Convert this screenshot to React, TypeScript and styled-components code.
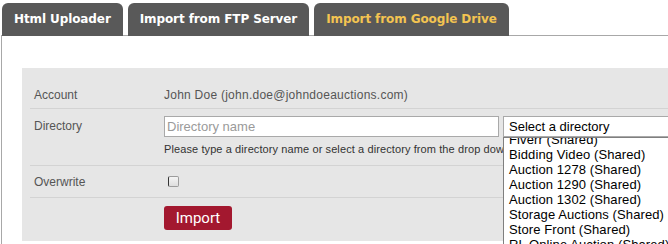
import * as React from 'react';
import styled, { createGlobalStyle } from 'styled-components';

const GlobalStyle = createGlobalStyle`
    html, body {
        margin: 0;
        padding: 0;
        background: #ffffff;
        overflow: hidden;
        font-family: "Liberation Sans", Arial, sans-serif;
    }
`;

const Page = styled.div`
    width: 760px;
    padding: 3px 0 0 1px;
`;

const TabBar = styled.div`
    display: flex;
    gap: 5px;
    padding-left: 1px;
    margin-bottom: -1px;
    position: relative;
    z-index: 1;
`;

const Tab = styled.div<{ $active?: boolean }>`
    height: 33px;
    line-height: 32px;
    padding: 0 12px;
    background: #595959;
    border-radius: 6px 6px 0 0;
    color: ${p => (p.$active ? '#f3c451' : '#ffffff')};
    font-family: "DejaVu Sans", Verdana, sans-serif;
    font-weight: bold;
    font-size: 12px;
    letter-spacing: -0.1px;
    white-space: nowrap;
    cursor: pointer;
`;

const Panel = styled.div`
    border-top: 1px solid #a8a8a8;
    border-left: 1px solid #a8a8a8;
    padding: 32px 0 0 20px;
    min-height: 220px;
`;

const FormBox = styled.div`
    background: #e6e6e6;
    padding: 13px 0 11px 8px;
`;

const Row = styled.div<{ $last?: boolean }>`
    display: grid;
    grid-template-columns: 134px 1fr;
    border-bottom: ${p => (p.$last ? 'none' : '1px solid #d3d3d3')};
`;

const Label = styled.div`
    padding-left: 4px;
    font-size: 12px;
    color: #555555;
    display: flex;
    align-items: center;
`;

const Value = styled.div`
    font-size: 12px;
    letter-spacing: 0.25px;
    color: #555555;
    display: flex;
    align-items: center;
`;

const TopLabel = styled(Label)`
    align-items: flex-start;
    padding-top: 7px;
    line-height: 21px;
`;

const DirectoryCell = styled.div`
    padding: 7px 0 9px;
`;

const InputLine = styled.div`
    display: flex;
    gap: 4px;
`;

const TextInput = styled.input`
    box-sizing: border-box;
    width: 335px;
    height: 21px;
    margin: 0;
    border: 1px solid #a9a9a9;
    padding: 0 2px;
    background: #ffffff;
    font-family: "Liberation Sans", Arial, sans-serif;
    font-size: 13px;
    color: #222222;
    outline: none;

    &::placeholder {
        color: #9a9a9a;
    }
`;

const SelectBox = styled.div`
    position: relative;
    box-sizing: border-box;
    width: 220px;
    height: 21px;
    border: 1px solid #a9a9a9;
    background: #ffffff;
    padding-left: 5px;
    font-size: 13px;
    line-height: 19px;
    color: #000000;
`;

const DropList = styled.div`
    position: absolute;
    top: 20px;
    left: -1px;
    width: 200px;
    height: 130px;
    overflow: hidden;
    background: #ffffff;
    border: 1px solid #7f7f7f;
    z-index: 2;
`;

const DropItem = styled.div`
    padding-left: 5px;
    line-height: 15px;
    font-size: 13px;
    letter-spacing: 0.1px;
    color: #000000;
    white-space: nowrap;
`;

const HelpText = styled.div`
    margin-top: 5px;
    line-height: 14px;
    font-size: 11px;
    letter-spacing: 0.1px;
    color: #333333;
    white-space: nowrap;
`;

const CheckRow = styled(Row)`
    height: 31px;
`;

const CheckBox = styled.span`
    box-sizing: border-box;
    display: inline-block;
    width: 11px;
    height: 11px;
    margin-left: 4px;
    border: 1px solid #9c9c9c;
    border-left-color: #333333;
    border-radius: 2px;
    background: linear-gradient(#f4f4f4, #dedede);
`;

const ButtonCell = styled.div`
    padding-top: 8px;
`;

const ImportButton = styled.button`
    width: 68px;
    height: 24px;
    border: none;
    border-radius: 3px;
    background: #a3182f;
    color: #ffffff;
    font-family: Roboto, "Liberation Sans", sans-serif;
    font-size: 15px;
    padding: 0;
    cursor: pointer;
`;

const folders = [
    'Fiverr (Shared)',
    'Bidding Video (Shared)',
    'Auction 1278 (Shared)',
    'Auction 1290 (Shared)',
    'Auction 1302 (Shared)',
    'Storage Auctions (Shared)',
    'Store Front (Shared)',
    'RL Online Auction (Shared)',
    'Photos (Shared)',
    'Catalogs (Shared)',
];

const tabs = ['Html Uploader', 'Import from FTP Server', 'Import from Google Drive'];

const App = () => {
    const listRef = React.useRef<HTMLDivElement>(null);
    React.useEffect(() => {
        if (listRef.current) {
            listRef.current.scrollTop = 6;
        }
    }, []);

    return (
        <Page>
            <GlobalStyle />
            <TabBar>
                {tabs.map((t, i) => (
                    <Tab key={t} $active={i === 2}>{t}</Tab>
                ))}
            </TabBar>
            <Panel>
                <FormBox>
                    <Row style={{ height: 27 }}>
                        <Label>Account</Label>
                        <Value>John Doe (john.doe@johndoeauctions.com)</Value>
                    </Row>
                    <Row>
                        <TopLabel>Directory</TopLabel>
                        <DirectoryCell>
                            <InputLine>
                                <TextInput placeholder="Directory name" />
                                <SelectBox>
                                    Select a directory
                                    <DropList ref={listRef}>
                                        {folders.map(f => (
                                            <DropItem key={f}>{f}</DropItem>
                                        ))}
                                    </DropList>
                                </SelectBox>
                            </InputLine>
                            <HelpText>
                                Please type a directory name or select a directory from the drop down list
                            </HelpText>
                        </DirectoryCell>
                    </Row>
                    <CheckRow>
                        <Label>Overwrite</Label>
                        <Value><CheckBox /></Value>
                    </CheckRow>
                    <Row $last>
                        <div />
                        <ButtonCell>
                            <ImportButton>Import</ImportButton>
                        </ButtonCell>
                    </Row>
                </FormBox>
            </Panel>
        </Page>
    );
};

export default App;
